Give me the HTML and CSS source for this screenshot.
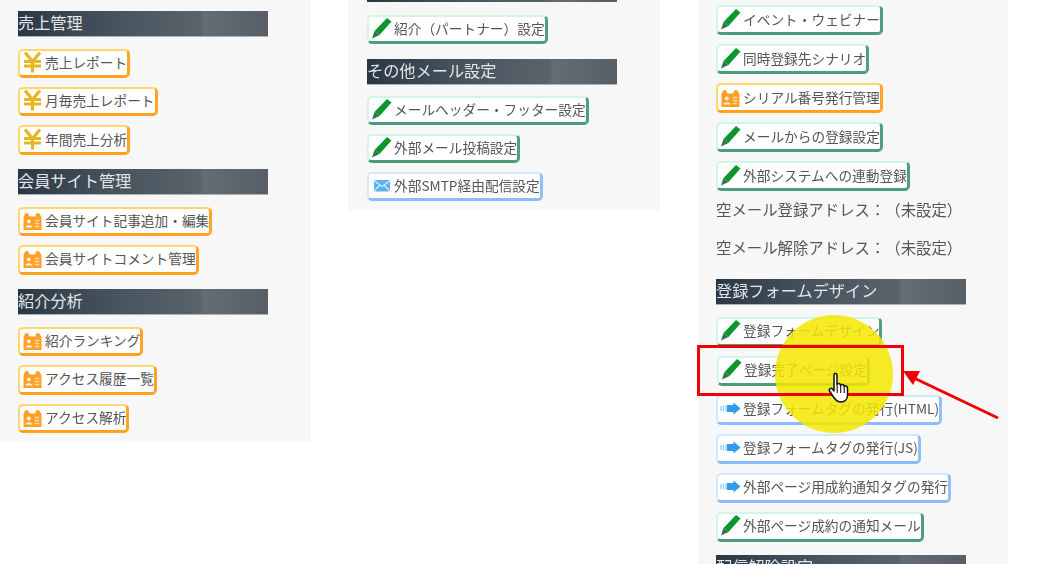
FILE: index.html
```html
<!DOCTYPE html>
<html lang="ja">

<head>
    <meta charset="UTF-8">
    <meta name="viewport" content="width=device-width, initial-scale=1.0">
    <title>メニュー</title>
    <link rel="stylesheet" href="styles.css">
</head>

<body>
    <svg class="defs" width="0" height="0">
        <symbol id="i-yen" viewBox="0 0 21 22">
            <path d="M3 1.500 10.500 10.500 18 1.500M2 10.500H19M2 15H19M10.500 10V21.500" fill="none" stroke="#e6b622" stroke-width="3.200"/>
        </symbol>
        <symbol id="i-pen" viewBox="0 0 21 22">
            <path d="M16 1 20.500 4.500 8.500 18 3.500 14Z" fill="#0c962c"/>
            <path d="M3.500 14 8.500 18 1 21.500Z" fill="#35724a"/>
        </symbol>
        <symbol id="i-member" viewBox="0 0 21 22">
            <path d="M1.500 8.500 3 4.500 6 4 7.500 7.500H13L14.500 4 17.500 4.500 19.500 8.500V21H1.500Z" fill="#ff9f24"/>
            <circle cx="6.800" cy="12.500" r="2" fill="#ffeed8"/>
            <path d="M3.300 18.500C4 15.500 9.800 15.500 10.500 18.500Z" fill="#ffeed8"/>
            <path d="M12.800 11.500H17.200M12.800 14.500H17.200M12.800 17.500H17.200" stroke="#ffdcae" stroke-width="1.400"/>
        </symbol>
        <symbol id="i-mail" viewBox="0 0 21 22">
            <rect x="3" y="6" width="16" height="11.500" rx="2" fill="#5ab0f0"/>
            <path d="M3.500 7 11 12.500 18.500 7M3.500 16.500 9 11M18.500 16.500 13 11" fill="none" stroke="#d8eeff" stroke-width="1.100"/>
        </symbol>
        <symbol id="i-arrow" viewBox="0 0 21 22">
            <path d="M1 9V14M3.500 8.500V14.500M6 8.500V14.500" stroke="#a4d4f8" stroke-width="1.500"/>
            <path d="M7 8H13.500V5.500L20.500 11.500 13.500 17.500V15H7Z" fill="#2e9cf0"/>
        </symbol>
    </svg>

    <div class="stage">
        <section class="panel panel-left">
            <h2 class="heading">売上管理</h2>
            <a class="btn btn-orange"><svg class="icon"><use href="#i-yen"/></svg>売上レポート</a>
            <a class="btn btn-orange"><svg class="icon"><use href="#i-yen"/></svg>月毎売上レポート</a>
            <a class="btn btn-orange"><svg class="icon"><use href="#i-yen"/></svg>年間売上分析</a>
            <h2 class="heading">会員サイト管理</h2>
            <a class="btn btn-orange"><svg class="icon"><use href="#i-member"/></svg>会員サイト記事追加・編集</a>
            <a class="btn btn-orange"><svg class="icon"><use href="#i-member"/></svg>会員サイトコメント管理</a>
            <h2 class="heading">紹介分析</h2>
            <a class="btn btn-orange"><svg class="icon"><use href="#i-member"/></svg>紹介ランキング</a>
            <a class="btn btn-orange"><svg class="icon"><use href="#i-member"/></svg>アクセス履歴一覧</a>
            <a class="btn btn-orange"><svg class="icon"><use href="#i-member"/></svg>アクセス解析</a>
        </section>

        <section class="panel panel-middle">
            <h2 class="heading heading-cut"></h2>
            <a class="btn btn-green"><svg class="icon"><use href="#i-pen"/></svg>紹介（パートナー）設定</a>
            <h2 class="heading">その他メール設定</h2>
            <a class="btn btn-green"><svg class="icon"><use href="#i-pen"/></svg>メールヘッダー・フッター設定</a>
            <a class="btn btn-green"><svg class="icon"><use href="#i-pen"/></svg>外部メール投稿設定</a>
            <a class="btn btn-blue"><svg class="icon"><use href="#i-mail"/></svg>外部SMTP経由配信設定</a>
        </section>

        <section class="panel panel-right">
            <a class="btn btn-green"><svg class="icon"><use href="#i-pen"/></svg>イベント・ウェビナー</a>
            <a class="btn btn-green"><svg class="icon"><use href="#i-pen"/></svg>同時登録先シナリオ</a>
            <a class="btn btn-orange"><svg class="icon"><use href="#i-member"/></svg>シリアル番号発行管理</a>
            <a class="btn btn-green"><svg class="icon"><use href="#i-pen"/></svg>メールからの登録設定</a>
            <a class="btn btn-green"><svg class="icon"><use href="#i-pen"/></svg>外部システムへの連動登録</a>
            <p class="address address-first">空メール登録アドレス：（未設定）</p>
            <p class="address">空メール解除アドレス：（未設定）</p>
            <h2 class="heading">登録フォームデザイン</h2>
            <a class="btn btn-green"><svg class="icon"><use href="#i-pen"/></svg>登録フォームデザイン</a>
            <a class="btn btn-green btn-active"><svg class="icon"><use href="#i-pen"/></svg>登録完了ページ設定</a>
            <a class="btn btn-blue"><svg class="icon"><use href="#i-arrow"/></svg>登録フォームタグの発行(HTML)</a>
            <a class="btn btn-blue"><svg class="icon"><use href="#i-arrow"/></svg>登録フォームタグの発行(JS)</a>
            <a class="btn btn-blue"><svg class="icon"><use href="#i-arrow"/></svg>外部ページ用成約通知タグの発行</a>
            <a class="btn btn-green"><svg class="icon"><use href="#i-pen"/></svg>外部ページ成約の通知メール</a>
            <h2 class="heading heading-last">配信解除設定</h2>
        </section>

        <!-- annotations drawn over the capture -->
        <div class="spotlight"></div>
        <div class="red-box"></div>
        <svg class="red-arrow" width="110" height="60" viewBox="0 0 110 60">
            <path d="M102 55 18 15" stroke="#f00000" stroke-width="3"/>
            <path d="M7 8 24 8 17 22Z" fill="#f00000"/>
        </svg>
        <svg class="hand" width="26" height="32" viewBox="0 0 26 32">
            <path d="M6 3C6 1 9 1 9 3V13C9.500 11 12.500 11 12.500 13.500 13 12 16 12 16 14.500 16.500 13.500 19.500 13.500 19.500 16V23C19.500 27 17 30 13 30 9 30 7.500 28 5.500 25L1.500 19C0.500 17 3 15.500 4.500 17L6 19Z" fill="#fff" stroke="#111" stroke-width="1.500" stroke-linejoin="round"/>
            <path d="M9.200 14V21M12.700 14V21M16.200 15V21" stroke="#111" stroke-width="1.100"/>
        </svg>
    </div>
</body>

</html>
```

FILE: styles.css
```css
html, body {
    margin: 0;
    padding: 0;
    height: 100%;
    background-color: #fff;
}

body {
    font-family: "Noto Sans CJK JP", "Noto Sans", sans-serif;
    color: #555;
    overflow: hidden;
    text-spacing-trim: space-all;
}

.defs {
    position: absolute;
}

.stage {
    position: relative;
    display: flex;
    align-items: flex-start;
    width: 1046px;
    height: 564px;
    overflow: hidden;
    filter: blur(0.5px);
}

.panel {
    display: flex;
    flex-direction: column;
    align-items: flex-start;
    box-sizing: border-box;
    background-color: #f7f7f8;
    padding-left: 18px;
}

.panel-left {
    width: 311px;
    height: 442px;
    padding-top: 5.5px;
}

.panel-middle {
    width: 312px;
    height: 210px;
    margin-left: 37px;
    padding-left: 19px;
}

.panel-right {
    width: 310px;
    height: 600px;
    margin-left: 38px;
    padding-top: 5px;
}

.heading {
    box-sizing: border-box;
    width: 250px;
    height: 26px;
    margin: 5.5px 0 11.5px;
    padding: 0 0 2px;
    font-size: 16.2px;
    font-weight: 400;
    line-height: 23px;
    white-space: nowrap;
    color: #e4e6e8;
    background: linear-gradient(90deg, #2a3845 0%, #45525c 35%, #59636c 73%, #646c74 74%, #575e66 100%);
    border-bottom: 1px solid #aeb2b6;
}

.heading-cut {
    height: 3px;
    margin: 0 0 13px;
    padding: 0;
    border-bottom: 0;
}

.heading-last {
    margin-top: 4px;
}

.btn {
    display: inline-flex;
    align-items: center;
    gap: 2px;
    box-sizing: border-box;
    height: 30px;
    margin-bottom: 9px;
    padding: 0 0 2px 2px;
    font-size: 13.7px;
    white-space: nowrap;
    color: #555;
    background-color: #fff;
    border-style: solid;
    border-width: 2px 3px 3px 2px;
    border-radius: 5px;
}

.btn-orange {
    border-color: #ffd76e #ffa526 #ffa01e #ffd76e;
}

.btn-green {
    border-color: #d2f5ea #4f9f7c #4a9d78 #d2f5ea;
}

.btn-blue {
    border-color: #d2e9fc #8fc0f7 #8abcf5 #d2e9fc;
}

.btn-active {
    margin-left: 1px;
}

.icon {
    flex: none;
    width: 21px;
    height: 22px;
}

.address {
    height: 38px;
    margin: 0;
    font-size: 15.4px;
    line-height: 38px;
    white-space: nowrap;
}

.address-first {
    margin-top: -10px;
}

.address + .heading {
    margin-top: 13px;
}

.spotlight {
    position: absolute;
    left: 775px;
    top: 315px;
    width: 118px;
    height: 118px;
    border-radius: 50%;
    background-color: rgba(245, 232, 0, 0.86);
}

.red-box {
    position: absolute;
    left: 697px;
    top: 345px;
    width: 207px;
    height: 51px;
    box-sizing: border-box;
    border: 3.5px solid #f00000;
}

.red-arrow {
    position: absolute;
    left: 896px;
    top: 363px;
}

.hand {
    position: absolute;
    left: 828px;
    top: 372px;
}
```
